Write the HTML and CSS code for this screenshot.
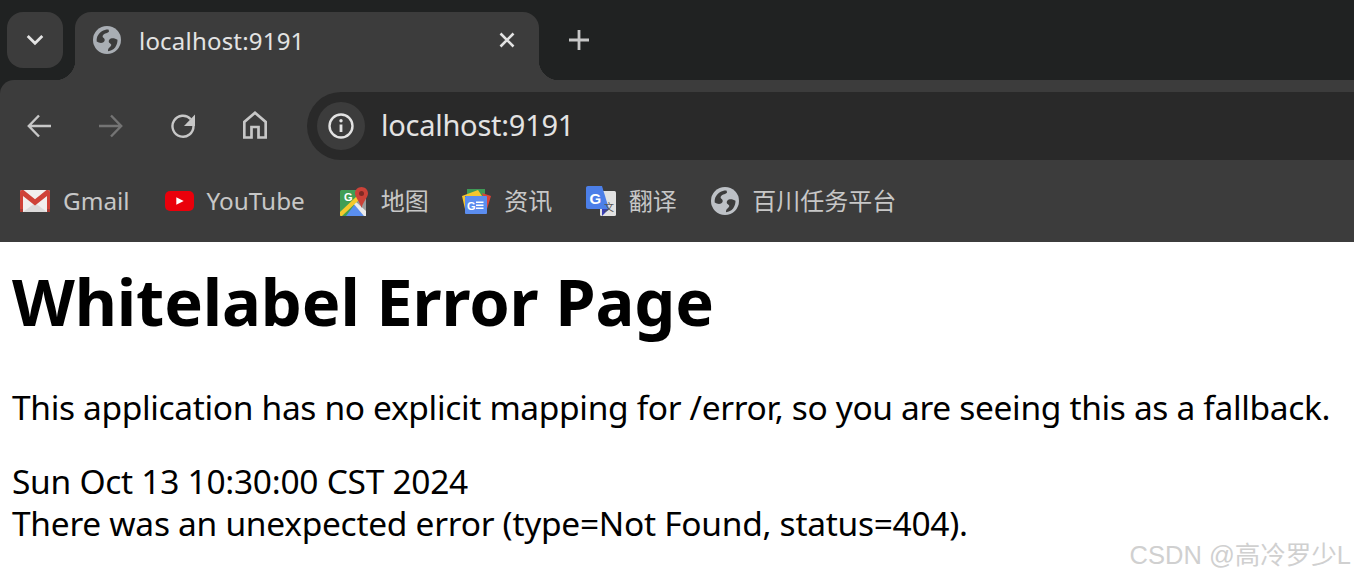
FILE: index.html
```html
<!DOCTYPE html>
<html lang="en">
<head>
<meta charset="utf-8">
<title>localhost:9191</title>
<link rel="stylesheet" href="styles.css">
</head>
<body>
<svg class="defs" width="0" height="0" aria-hidden="true">
  <symbol id="globe" viewBox="0 0 28 28">
    <circle cx="14" cy="14" r="14" fill="currentColor"/>
    <path fill="var(--globe-cut)" d="M15.500 3.600C11 3.400 6.600 6 4.300 10.600c-.6 1.500-.8 3.400-.6 5 2 1.400 4.600 1.700 6.300 1 1.500-.7 2-2.300 1.500-3.500-.4-1-1.900-1.400-1.900-2.500 0-1.300 1.300-2.400 2.600-3 1.400-.6 3.200-.8 3.700-1.800.2-.7 0-1.400-.4-1.700z"/>
    <path fill="var(--globe-cut)" d="M24.500 13.800c-1.800-1.200-4.700-1.900-6.600-1.200-1.500.6-2.400 2-2.100 3.300.3 1.100 2 1.500 2.400 2.700.3 1.100-.7 2-1.700 2.800-.9.700-1.700 1.700-1.500 3.900 2.700-.3 5.400-1.700 7.100-3.800 1.500-2 2.400-4.500 2.400-7.700z"/>
  </symbol>
</svg>

<header class="chrome">
  <div class="strip">
    <button class="tab-search" aria-label="Search tabs">
      <svg width="18" height="12" viewBox="0 0 18 12"><path d="M1.700 2 9 9.300 16.300 2" fill="none" stroke="#e3e3e3" stroke-width="2.800"/></svg>
    </button>
    <div class="tab">
      <svg class="tab-globe" width="28" height="28"><use href="#globe"/></svg>
      <span class="tab-title">localhost:9191</span>
      <svg class="tab-close" width="18" height="18" viewBox="0 0 18 18"><path d="M2.500 2.500l13 13m0-13-13 13" stroke="#e3e3e3" stroke-width="2.600" fill="none"/></svg>
    </div>
    <svg class="new-tab" width="22" height="22" viewBox="0 0 22 22"><path d="M11 1v20M1 11h20" stroke="#c7c7c7" stroke-width="2.800" fill="none"/></svg>
  </div>

  <div class="toolbar">
    <div class="nav">
      <svg width="24" height="24" viewBox="0 0 24 24"><path d="M24 12H3M12 1.500 1.800 12 12 22.500" fill="none" stroke="#c7c7c7" stroke-width="2.400"/></svg>
      <svg width="24" height="24" viewBox="0 0 24 24"><path d="M0 12h21M12 1.500 22.200 12 12 22.500" fill="none" stroke="#747474" stroke-width="2.400"/></svg>
      <svg width="24" height="24" viewBox="0 0 24 24"><path d="M19.800 5.200A10.500 10.500 0 1 0 22.500 12" fill="none" stroke="#c7c7c7" stroke-width="2.400"/><path d="M24 .5V12H13z" fill="#c7c7c7"/></svg>
      <svg class="home" width="24" height="28" viewBox="0 0 24 28"><path d="M1.300 26.500V11L12 1.800 22.700 11v15.500h-7.200V16h-7v10.500z" fill="none" stroke="#c7c7c7" stroke-width="2.700"/></svg>
    </div>
    <div class="omnibox">
      <span class="info">
        <svg width="26" height="26" viewBox="0 0 26 26"><circle cx="13" cy="13" r="11.500" fill="none" stroke="#e3e3e3" stroke-width="2.400"/><path d="M13 11.500v7.500" stroke="#e3e3e3" stroke-width="2.800"/><circle cx="13" cy="7.800" r="1.700" fill="#e3e3e3"/></svg>
      </span>
      <span class="url">localhost:9191</span>
    </div>
  </div>

  <nav class="bookmarks">
    <a class="bookmark">
      <svg width="30" height="22" viewBox="0 0 30 22"><rect width="30" height="22" rx="2" fill="#f1efee"/><path d="M3 22 15 13l12 9z" fill="#dcdada"/><path d="M3 21.500V6l12 9.500L27 6v15.500h3V2c0-1.200-.8-2-2-2h-1.500L15 9.300 3.500 0H2C.8 0 0 .8 0 2v19.500z" fill="#cf4238"/><path d="M0 19h3v3H0zM27 19h3v3h-3z" fill="#a93c34"/></svg>
      <span>Gmail</span>
    </a>
    <a class="bookmark">
      <svg width="29" height="20" viewBox="0 0 29 20"><rect width="29" height="20" rx="5" fill="#ea000b"/><path d="M11.300 6.300v7.400l7.400-3.700z" fill="#fff"/></svg>
      <span>YouTube</span>
    </a>
    <a class="bookmark">
      <svg width="28" height="29" viewBox="0 0 28 29"><rect y="3" width="26" height="26" rx="1.500" fill="#3f9e55"/><path d="M17 12h9v17H18z" fill="#9b9d9c"/><path d="M6 29 15 17l9 12z" fill="#5a8ff0"/><path d="M15 14l11 10v5h-2L13 16z" fill="#ebebeb"/><path d="M0 25 17 9l3 3L2 29H1c-.6 0-1-.5-1-1z" fill="#f4c92c"/><path d="M21.500 0C25 0 28 2.800 28 6.300c0 4.300-4.400 7.300-6.500 14.700C19.400 13.600 15 10.600 15 6.300 15 2.800 18 0 21.500 0z" fill="#cb4238"/><circle cx="21.500" cy="6.500" r="2.500" fill="#7d2a24"/><text class="tiny-g" x="4" y="14">G</text></svg>
      <span class="cjk">地图</span>
    </a>
    <a class="bookmark">
      <svg width="29" height="25" viewBox="0 0 29 25"><path d="M5 0h18v7H5z" fill="#3f9a56"/><path d="M0 7 16 1l4 6H3v13z" fill="#f5c62d"/><path d="M20 4l9 3-4 13z" fill="#d8433a"/><rect x="3" y="7" width="22" height="18" rx="1" fill="#5b8def"/><text class="news-g" x="5" y="20.500">G</text><path d="M14 12.500h7.500V14H14zM14 15.500h7.500V17H14zM14 18.500h7.500V20H14z" fill="#fff"/></svg>
      <span class="cjk">资讯</span>
    </a>
    <a class="bookmark">
      <svg width="30" height="30" viewBox="0 0 30 30"><rect x="14" y="5" width="16" height="25" rx="1.500" fill="#e2e2e2"/><path d="M16 23h7l-7 7z" fill="#3a3fb3"/><path d="M2 0h14l7 23H2c-1.200 0-2-.8-2-2V2C0 .8.800 0 2 0z" fill="#4c7fe8"/><text class="trans-g" x="3.500" y="17.500">G</text><text class="trans-w" x="18" y="24.500">文</text></svg>
      <span class="cjk">翻译</span>
    </a>
    <a class="bookmark globe-mark">
      <svg width="28" height="28"><use href="#globe"/></svg>
      <span class="cjk">百川任务平台</span>
    </a>
  </nav>
</header>

<main class="page">
  <h1>Whitelabel Error Page</h1>
  <p>This application has no explicit mapping for /error, so you are seeing this as a fallback.</p>
  <div class="detail">Sun Oct 13 10:30:00 CST 2024</div>
  <div class="detail">There was an unexpected error (type=Not Found, status=404).</div>
</main>
<div class="watermark">CSDN @高冷罗少L</div>
</body>
</html>
```
FILE: styles.css
```css
* { box-sizing: border-box; }
html, body { margin: 0; height: 100%; overflow: hidden; background: #fff; }
body { font-family: "Noto Sans", "Noto Sans CJK SC", sans-serif; position: relative; }
.defs { display: block; height: 0; }

.chrome { background: #202222; }
.strip { height: 80px; display: flex; align-items: flex-start; padding: 12px 0 0 7px; }
.tab-search { width: 56px; height: 56px; border: 0; padding: 0; border-radius: 16px; background: #3c3c3c; display: flex; align-items: center; justify-content: center; }
.tab { position: relative; margin-left: 12px; width: 464px; height: 68px; background: #3c3c3c; border-radius: 16px 16px 0 0; display: flex; align-items: flex-start; padding: 14px 23px 0 18px; --globe-cut: #3c3c3c; color: #a9aeb4; }
.tab::before, .tab::after { content: ""; position: absolute; bottom: 0; width: 20px; height: 20px; }
.tab::before { left: -20px; background: radial-gradient(circle at 0 0, transparent 20px, #3c3c3c 20.500px); }
.tab::after { right: -20px; background: radial-gradient(circle at 100% 0, transparent 20px, #3c3c3c 20.500px); }
.tab-title { margin-left: 18px; font-size: 24px; line-height: 30px; color: #e3e3e3; letter-spacing: .2px; flex: 1; }
.tab-close { margin-top: 5px; }
.new-tab { margin: 17px 0 0 29px; }

.toolbar { height: 80px; background: #3c3c3c; border-radius: 14px 0 0 0; padding: 12px 0 0 27px; display: flex; align-items: stretch; }
.nav { display: flex; align-items: center; gap: 48px; width: 280px; }
.home { margin-top: -2px; }
.omnibox { flex: 1; background: #292929; border-radius: 34px 0 0 34px; display: flex; align-items: center; padding-left: 10px; }
.info { width: 48px; height: 48px; border-radius: 50%; background: #3c3c3c; display: flex; align-items: center; justify-content: center; }
.url { margin: -2px 0 0 16px; font-size: 29px; line-height: 40px; color: #e3e3e3; letter-spacing: -.25px; }

.bookmarks { height: 82px; background: #3c3c3c; display: flex; align-items: center; padding: 0 0 0 20px; gap: 34.500px; --globe-cut: #3c3c3c; color: #bdc1c6; }
.bookmark { display: flex; align-items: center; gap: 13px; color: #c7c7c7; font-size: 24.300px; line-height: 34px; }
.bookmark:nth-child(-n+2) { margin-right: .5px; }
.bookmark:nth-child(3), .bookmark:nth-child(4) { margin-right: -1px; }
.bookmark .cjk { font-size: 24px; }
.globe-mark svg { color: #bdc1c6; }
.tiny-g, .news-g, .trans-g { font-family: "Liberation Sans", sans-serif; font-weight: 700; fill: #fff; }
.tiny-g { font-size: 11px; }
.news-g { font-size: 11px; }
.trans-g { font-size: 15px; }
.trans-w { font-family: "Noto Sans CJK SC", sans-serif; font-size: 10px; fill: #555; }

.page { padding: 17px 12px 0; color: #000; }
h1 { margin: 0; font-size: 65px; line-height: 84px; font-weight: 700; letter-spacing: -.15px; }
p { margin: 41px 0 30px; font-size: 33.500px; line-height: 46px; letter-spacing: -.34px; }
.detail { font-size: 33.500px; line-height: 42px; letter-spacing: -.28px; }

.watermark { position: absolute; right: 3px; top: 540px; font-family: "Liberation Sans", "Noto Sans CJK SC", sans-serif; font-size: 25.500px; line-height: 30px; color: #d0d0d0; white-space: nowrap; }
```
